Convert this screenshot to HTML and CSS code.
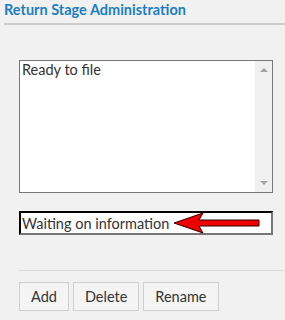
FILE: index.html
```html
<!DOCTYPE html>
<html>
<head>
  <meta charset="utf-8">
  <title>Return Stage Administration</title>
  <link rel="stylesheet" href="styles.css">
</head>
<body>
  <h2 class="title">Return Stage Administration</h2>

  <div class="panel">
    <div class="listbox">
      <div class="items">
        <div class="item">Ready to file</div>
      </div>
      <div class="scrollbar">
        <span class="tri up"></span>
        <span class="tri down"></span>
      </div>
    </div>

    <div class="field">
      <input class="name" type="text" value="Waiting on information">
      <svg class="arrow" width="90" height="22" viewBox="0 0 90 22">
        <polygon points="1,11 30,1 26,8 86,8 86,14 26,14 30,21" fill="#ee0000" stroke="#300" stroke-width="1"/>
      </svg>
    </div>
  </div>

  <div class="actions">
    <button class="btn">Add</button>
    <button class="btn">Delete</button>
    <button class="btn">Rename</button>
  </div>
</body>
</html>
```
FILE: styles.css
```css
body {
  background: #f1f1f1;
  margin: 0;
  padding: 0;
  font-family: Lato, "Open Sans", sans-serif;
  color: #333;
}

.title {
  color: #1b7fc0;
  font-size: 14.5px;
  font-weight: bold;
  margin: 0 0 0 4px;
  padding: 2px 0 5px 0;
  border-bottom: 2px solid #cdcdcd;
  line-height: 16px;
}

.panel {
  padding: 35px 12px 0 19px;
}

.listbox {
  display: flex;
  height: 131px;
  border: 1px solid #777;
  background: #fff;
}

.items {
  flex: 1;
  padding: 1px 2px;
  font-size: 14.5px;
  line-height: 16px;
}

.scrollbar {
  width: 17px;
  background: #f0f0f0;
  display: flex;
  flex-direction: column;
  justify-content: space-between;
  align-items: center;
  padding: 7px 0 7px 0;
}

.tri {
  width: 0;
  height: 0;
  border-left: 4px solid transparent;
  border-right: 4px solid transparent;
}

.tri.up {
  border-bottom: 4px solid #a3a3a3;
}

.tri.down {
  border-top: 4px solid #a3a3a3;
}

.field {
  position: relative;
  margin-top: 18px;
}

.name {
  display: block;
  box-sizing: border-box;
  width: 100%;
  height: 24px;
  margin: 0;
  padding: 0 0 0 1px;
  border: 2px inset #777;
  border-color: #222 #777 #777 #222;
  background: #fff;
  font-family: Lato, "Open Sans", sans-serif;
  font-size: 14.5px;
  color: #333;
}

.arrow {
  position: absolute;
  left: 154px;
  top: 1px;
}

.actions {
  margin: 35px 0 0 19px;
  padding-top: 11px;
  border-top: 1px solid #dadada;
  display: flex;
  gap: 4px;
}

.btn {
  height: 29px;
  padding: 0 11px;
  background: #f4f4f4;
  border: 1px solid #cfcfcf;
  border-radius: 0;
  font-family: Lato, "Open Sans", sans-serif;
  font-size: 14.5px;
  color: #333;
}
```
